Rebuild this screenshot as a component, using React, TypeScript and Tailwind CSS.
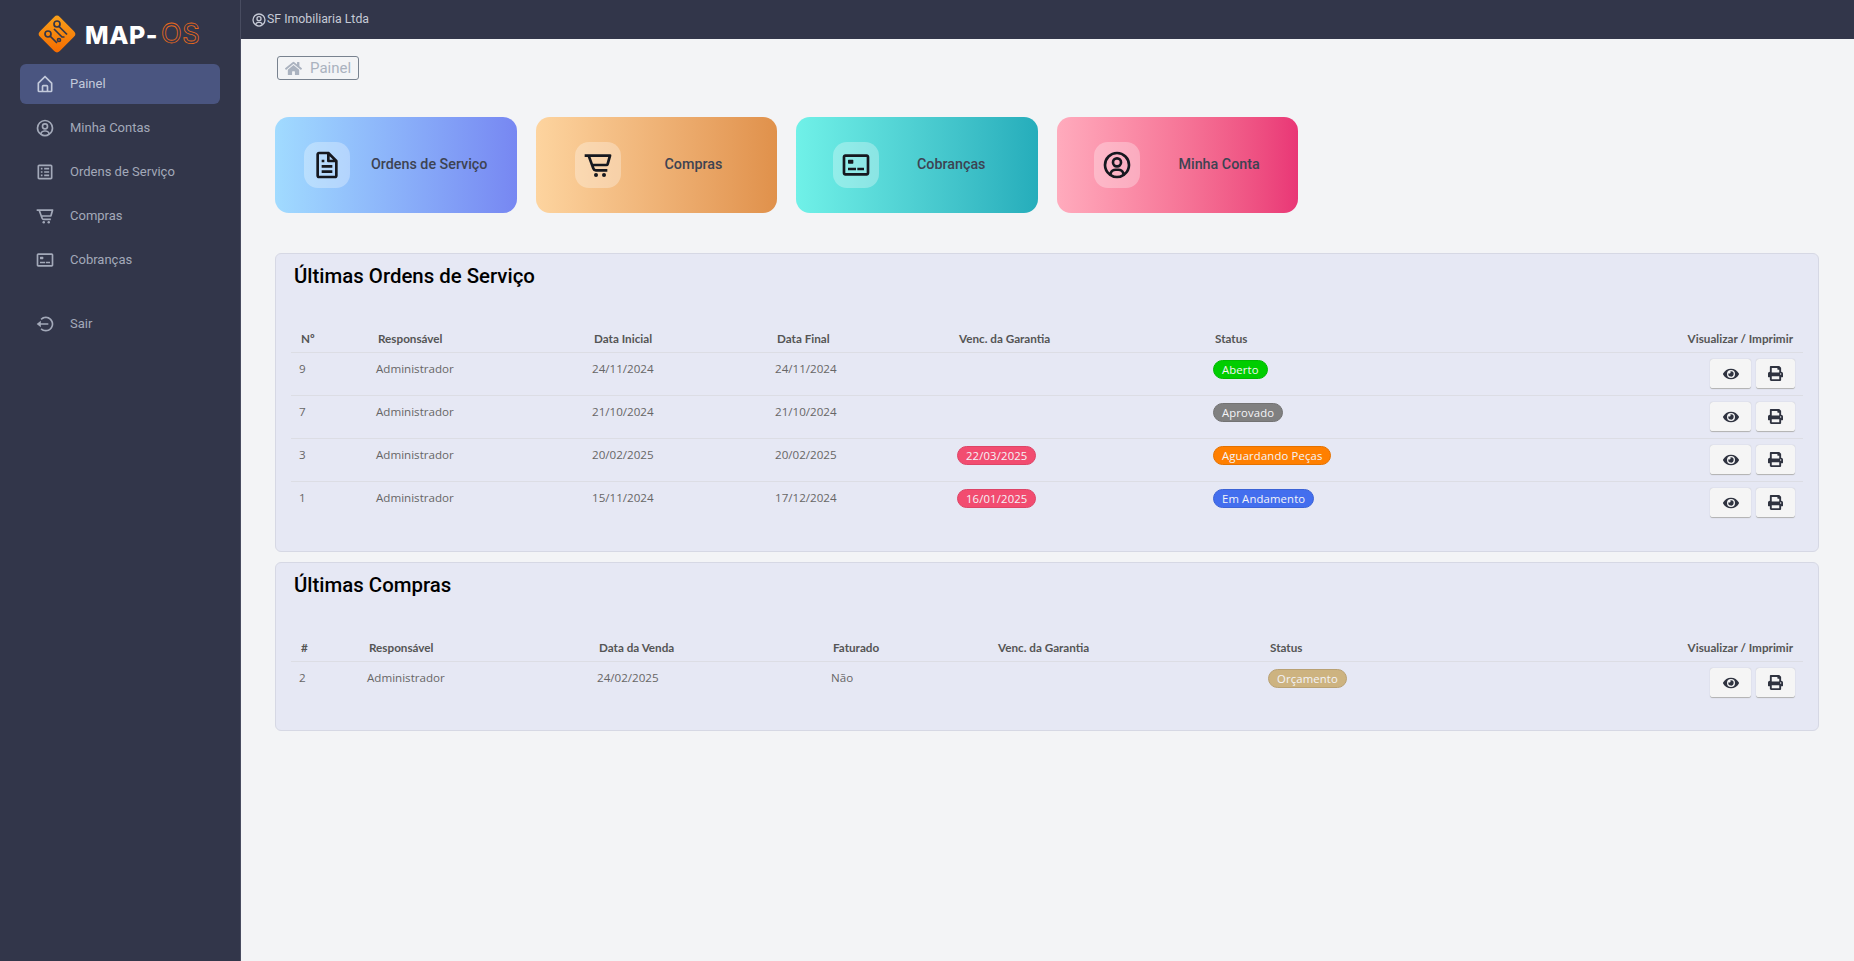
import React from 'react';
import { BiHomeAlt, BiUserCircle, BiSpreadsheet, BiCartAlt, BiCreditCardFront, BiLogOutCircle, BiFile } from 'react-icons/bi';
import { FaHome, FaEye, FaPrint } from 'react-icons/fa';

const tableFont = { fontFamily: '"Open Sans", "Noto Sans", sans-serif' };
const headFont = { fontFamily: 'Lato, "Open Sans", sans-serif' };

const navItems = [
  { label: 'Painel', icon: BiHomeAlt, active: true },
  { label: 'Minha Contas', icon: BiUserCircle },
  { label: 'Ordens de Serviço', icon: BiSpreadsheet },
  { label: 'Compras', icon: BiCartAlt },
  { label: 'Cobranças', icon: BiCreditCardFront },
];

const cards = [
  { label: 'Ordens de Serviço', icon: BiFile, bg: 'from-[#a1dbff] to-[#7787f2]', tile: 'ml-[29px]', text: 'ml-[21px]' },
  { label: 'Compras', icon: BiCartAlt, bg: 'from-[#fdd49f] to-[#e0914b]', tile: 'ml-[39px]', text: 'ml-[44px]' },
  { label: 'Cobranças', icon: BiCreditCardFront, bg: 'from-[#70f1e8] to-[#25adbb]', tile: 'ml-[37px]', text: 'ml-[38px]' },
  { label: 'Minha Conta', icon: BiUserCircle, bg: 'from-[#ffabbd] to-[#e93676]', tile: 'ml-[37px]', text: 'ml-[39px]' },
];

const orders = [
  { id: '9', start: '24/11/2024', end: '24/11/2024', status: 'Aberto', color: 'bg-[#00cd00] border-[#00b800]' },
  { id: '7', start: '21/10/2024', end: '21/10/2024', status: 'Aprovado', color: 'bg-[#808080] border-[#737373]' },
  { id: '3', start: '20/02/2025', end: '20/02/2025', warranty: '22/03/2025', status: 'Aguardando Peças', color: 'bg-[#ff7f00] border-[#e57200]' },
  { id: '1', start: '15/11/2024', end: '17/12/2024', warranty: '16/01/2025', status: 'Em Andamento', color: 'bg-[#436eee] border-[#3c63d6]' },
];

const Pill = ({ text, color }: { text: string; color: string }) => (
  <span className={`inline-block h-[19px] rounded-[10px] border px-[8px] text-[11.3px] leading-[17px] tracking-[0.15px] text-[#f4f4f8] ${color}`}>{text}</span>
);

const Actions = () => (
  <div className="flex justify-end gap-[5px] pr-[8px] pt-[6px]">
    <button className="flex h-[30px] w-[41px] items-center justify-center rounded-[3px] border-b border-b-[#b5b5b5] bg-[#f5f5f5] text-[#2f3340] shadow-[0_0_1px_rgba(0,0,0,0.25)]">
      <FaEye className="h-[16px] w-[16px]" />
    </button>
    <button className="flex h-[30px] w-[39px] items-center justify-center rounded-[3px] border-b border-b-[#b5b5b5] bg-[#f5f5f5] text-[#2f3340] shadow-[0_0_1px_rgba(0,0,0,0.25)]">
      <FaPrint className="h-[15px] w-[15px]" />
    </button>
  </div>
);

const Panel = ({ title, children, className }: { title: string; children: React.ReactNode; className: string }) => (
  <section className={`rounded-[6px] border border-[#d6d8e4] bg-[#e6e8f4] px-[15px] ${className}`}>
    <h2 className="pl-[3px] pt-[8px] text-[20.4px] leading-[28px] font-medium text-black">{title}</h2>
    <div style={tableFont}>{children}</div>
  </section>
);

const Sidebar = () => (
  <aside className="flex w-[241px] shrink-0 flex-col border-r border-[#484c60] bg-[#32364a]">
    <div className="flex h-[64px] items-start pl-[38px] pt-[15px]">
      <svg viewBox="0 0 38 38" className="h-[38px] w-[38px]">
        <defs>
          <linearGradient id="lg" x1="0" y1="0" x2="1" y2="1">
            <stop offset="0" stopColor="#f9a21a" />
            <stop offset="1" stopColor="#f56a00" />
          </linearGradient>
        </defs>
        <rect x="5" y="5" width="28" height="28" rx="4" transform="rotate(45 19 19)" fill="url(#lg)" />
        <g fill="none" stroke="#33364a" strokeWidth="1.7">
          <circle cx="19" cy="9" r="3" />
          <path d="M21 11.5 L29 19.5" />
          <circle cx="10" cy="19" r="3" />
          <path d="M12.5 21.5 L19 28" />
          <path d="M16 14 L24 22 L26.5 22" />
          <circle cx="21" cy="25" r="1.5" />
        </g>
      </svg>
      <span className="ml-[9px] mt-[5px] text-[25px] leading-[30px] font-extrabold tracking-[0.6px] text-white" style={{ fontFamily: 'Inter, sans-serif' }}>MAP-</span>
      <span className="ml-[3px] mt-[4px] text-[27px] leading-[30px] font-medium tracking-[0.5px] text-transparent [-webkit-text-stroke:0.8px_#e8691c]" style={{ fontFamily: 'Inter, sans-serif' }}>OS</span>
    </div>
    <nav className="flex flex-col">
      {navItems.map((item) => (
        <a key={item.label} className={`mx-[20px] mb-[4px] flex h-[40px] items-center rounded-[6px] pl-[15px] text-[13px] ${item.active ? 'bg-[#4a5580] text-[#c3cadb]' : 'text-[#a3a9b9]'}`}>
          <item.icon className="h-[20px] w-[20px]" />
          <span className="ml-[15px]">{item.label}</span>
        </a>
      ))}
      <a className="mx-[20px] mt-[20px] flex h-[40px] items-center pl-[15px] text-[13px] text-[#a3a9b9]">
        <BiLogOutCircle className="h-[20px] w-[20px]" />
        <span className="ml-[15px]">Sair</span>
      </a>
    </nav>
  </aside>
);

const HeadRow = ({ cols, labels }: { cols: string; labels: string[] }) => (
  <div className={`mt-[36px] grid h-[26px] items-center text-[11.7px] font-bold text-[#555] ${cols}`} style={headFont}>
    {labels.map((l) => <span key={l} className="pl-[10px]">{l}</span>)}
    <span className="flex justify-between pl-[10px] pr-[10px]"><span>Status</span><span>Visualizar / Imprimir</span></span>
  </div>
);

export default function App() {
  return (
    <div className="flex min-h-screen bg-[#f3f4f6]" style={{ fontFamily: 'Roboto, sans-serif' }}>
      <Sidebar />
      <main className="min-w-0 flex-1">
        <header className="flex h-[39px] items-center bg-[#32364a] pl-[10px] text-[12.3px] text-[#c6cad6]">
          <BiUserCircle className="h-[16px] w-[16px]" />
          <span>SF Imobiliaria Ltda</span>
        </header>
        <div className="pl-[34px] pr-[35px]">
          <div className="ml-[2px] mt-[17px] flex h-[24px] w-fit items-center rounded-[3px] border border-[#78828f] pl-[7px] pr-[7px] text-[15px] text-[#aab2bf]">
            <FaHome className="h-[17px] w-[17px]" />
            <span className="ml-[8px]">Painel</span>
          </div>
          <div className="mt-[37px] flex gap-[19px]">
            {cards.map((c) => (
              <div key={c.label} className={`flex h-[96px] w-[241.5px] items-center rounded-[14px] bg-gradient-to-r ${c.bg}`}>
                <div className={`flex h-[46px] w-[46px] items-center justify-center rounded-[14px] bg-white/30 ${c.tile}`}>
                  <c.icon className="h-[32px] w-[32px] text-[#16181f]" />
                </div>
                <span className={`text-[14.3px] font-medium text-[#3d4352] ${c.text}`}>{c.label}</span>
              </div>
            ))}
          </div>

          <Panel title="Últimas Ordens de Serviço" className="mt-[40px] h-[299px]">
            <HeadRow cols="grid-cols-[77px_216px_183px_182px_256px_1fr]" labels={['Nº', 'Responsável', 'Data Inicial', 'Data Final', 'Venc. da Garantia']} />
            {orders.map((o) => (
              <div key={o.id} className="grid h-[43px] grid-cols-[77px_216px_183px_182px_256px_1fr] border-t border-[#dcdde4] text-[11.6px] text-[#666]">
                <span className="pl-2 pt-[7px]">{o.id}</span>
                <span className="pl-2 pt-[7px]">Administrador</span>
                <span className="pl-2 pt-[7px]">{o.start}</span>
                <span className="pl-2 pt-[7px]">{o.end}</span>
                <span className="pl-2 pt-[7px]">{o.warranty && <Pill text={o.warranty} color="bg-[#f24c70] border-[#de4466]" />}</span>
                <div className="flex justify-between pl-2">
                  <span className="pt-[7px]"><Pill text={o.status} color={o.color} /></span>
                  <Actions />
                </div>
              </div>
            ))}
          </Panel>

          <Panel title="Últimas Compras" className="mt-[10px] h-[169px]">
            <HeadRow cols="grid-cols-[68px_230px_234px_165px_272px_1fr]" labels={['#', 'Responsável', 'Data da Venda', 'Faturado', 'Venc. da Garantia']} />
            <div className="grid h-[43px] grid-cols-[68px_230px_234px_165px_272px_1fr] border-t border-[#dcdde4] text-[11.6px] text-[#666]">
              <span className="pl-2 pt-[7px]">2</span>
              <span className="pl-2 pt-[7px]">Administrador</span>
              <span className="pl-2 pt-[7px]">24/02/2025</span>
              <span className="pl-2 pt-[7px]">Não</span>
              <span />
              <div className="flex justify-between pl-2">
                <span className="pt-[7px]"><Pill text="Orçamento" color="bg-[#cdb380] border-[#b9a173]" /></span>
                <Actions />
              </div>
            </div>
          </Panel>
        </div>
      </main>
    </div>
  );
}
